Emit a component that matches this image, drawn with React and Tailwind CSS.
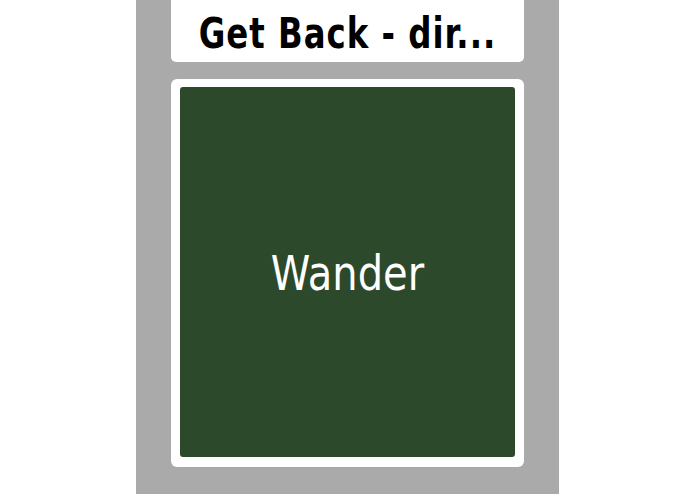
export default function App() {
  return (
    <div className="h-[494px] w-full bg-white flex justify-center overflow-hidden">
      <div className="w-[423px] h-full bg-[#aaaaaa] flex flex-col items-center">
        <div className="w-[353px] h-[62px] bg-white rounded-b-[5px] flex items-center justify-center">
          <span
            className="block scale-y-[1.2] text-[36px] font-bold leading-none text-black tracking-[1px] pt-[3px]"
            style={{ fontFamily: '"DejaVu Sans Condensed", "DejaVu Sans", sans-serif' }}
          >
            Get Back - dir...
          </span>
        </div>
        <div className="mt-[17px] w-[353px] h-[388px] bg-white rounded-[6px] pt-[8px] pl-[9px] pr-[9px] pb-[10px]">
          <div className="w-full h-full bg-[#2c4a2b] rounded-[3px] flex items-center justify-center">
            <span
              className="block scale-y-[1.2] text-[40px] leading-none text-white pt-[2px]"
              style={{ fontFamily: '"DejaVu Sans", sans-serif' }}
            >
              Wander
            </span>
          </div>
        </div>
      </div>
    </div>
  );
}
